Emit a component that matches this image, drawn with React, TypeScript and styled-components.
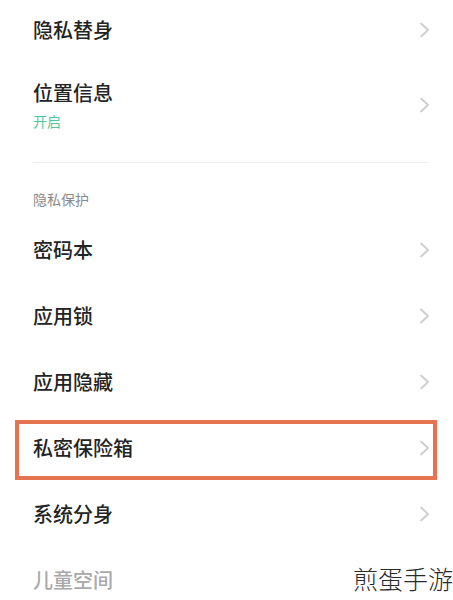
import React from "react";
import styled, { createGlobalStyle } from "styled-components";

const GlobalStyle = createGlobalStyle`
  html, body {
    margin: 0;
    padding: 0;
    background: #ffffff;
    font-family: "Noto Sans CJK SC", "Noto Sans", sans-serif;
  }
  body {
    height: 600px;
    overflow: hidden;
  }
`;

const Page = styled.div`
  position: relative;
  width: 453px;
  height: 600px;
  overflow: hidden;
  background: #fff;
`;

const List = styled.div`
  display: flex;
  flex-direction: column;
`;

const Row = styled.div<{ $height: number }>`
  position: relative;
  display: flex;
  align-items: center;
  justify-content: space-between;
  height: ${(p) => p.$height}px;
  padding: 0 23px 0 33px;
  box-sizing: border-box;
`;

const TextBlock = styled.div`
  display: flex;
  flex-direction: column;
  gap: 5px;
`;

const Title = styled.div<{ $muted?: boolean }>`
  font-size: 20px;
  line-height: 26px;
  font-weight: 500;
  color: ${(p) => (p.$muted ? "#a9a9a9" : "#232323")};
`;

const Sub = styled.div`
  font-size: 14px;
  line-height: 20px;
  color: #4fc89e;
`;

const Divider = styled.div`
  height: 1px;
  margin: 12px 25px 0 33px;
  background: #ededed;
`;

const SectionHeader = styled.div`
  height: 54px;
  box-sizing: border-box;
  padding: 26px 33px 0;
  font-size: 14px;
  line-height: 20px;
  color: #8a8a8a;
`;

const Highlight = styled.div`
  position: absolute;
  left: 15px;
  right: 16px;
  top: 5px;
  bottom: 1px;
  border: 4px solid #e5734f;
  pointer-events: none;
`;

const Watermark = styled.div`
  position: absolute;
  right: 0;
  bottom: 6px;
  font-size: 25px;
  font-weight: 300;
  color: #2a2a2a;
  line-height: 32px;
`;

const Chevron = () => (
  <svg width="11" height="16" viewBox="0 0 11 16" fill="none">
    <path d="M2 1.5 L9 8 L2 14.5" stroke="#cdcdcd" strokeWidth="1.8" strokeLinecap="round" strokeLinejoin="round" />
  </svg>
);

type Item = { title: string; sub?: string; muted?: boolean; boxed?: boolean };

const top: Item[] = [{ title: "隐私替身" }, { title: "位置信息", sub: "开启" }];
const guard: Item[] = [
  { title: "密码本" },
  { title: "应用锁" },
  { title: "应用隐藏" },
  { title: "私密保险箱", boxed: true },
  { title: "系统分身" },
  { title: "儿童空间", muted: true },
];

const ItemRow = ({ item, height }: { item: Item; height: number }) => (
  <Row $height={height}>
    <TextBlock>
      <Title $muted={item.muted}>{item.title}</Title>
      {item.sub && <Sub>{item.sub}</Sub>}
    </TextBlock>
    {!item.muted && <Chevron />}
    {item.boxed && <Highlight />}
  </Row>
);

export default function App() {
  return (
    <Page>
      <GlobalStyle />
      <List>
        <ItemRow item={top[0]} height={60} />
        <ItemRow item={top[1]} height={90} />
        <Divider />
        <SectionHeader>隐私保护</SectionHeader>
        {guard.map((item) => (
          <ItemRow key={item.title} item={item} height={66} />
        ))}
      </List>
      <Watermark>煎蛋手游</Watermark>
    </Page>
  );
}
